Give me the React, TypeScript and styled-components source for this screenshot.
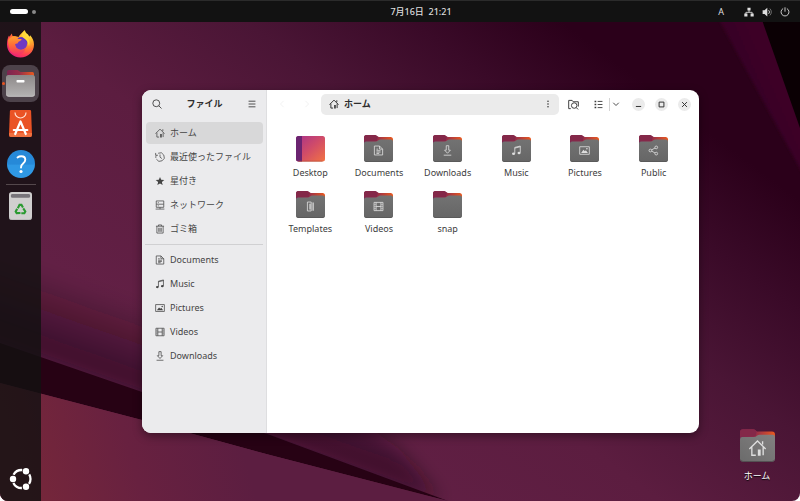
import React from "react";
import styled, { createGlobalStyle, css } from "styled-components";

const GlobalStyle = createGlobalStyle`
  *, *::before, *::after { box-sizing: border-box; }
  body {
    margin: 0;
    background: #fff;
    font: 9px/12px "Noto Sans", "Noto Sans CJK JP", sans-serif;
    color: #3d3d3d;
  }
  button {
    margin: 0;
    padding: 0;
    border: 0;
    background: none;
    font: inherit;
    color: inherit;
    cursor: pointer;
  }
  svg { display: block; flex: none; }
`;

/* ---------- glyphs ---------- */

type GlyphName =
  | "home" | "recent" | "star" | "network" | "trash" | "documents" | "music"
  | "pictures" | "videos" | "downloads" | "share" | "templates" | "search"
  | "menu" | "back" | "forward" | "more" | "folderSearch" | "list" | "chevron"
  | "minimize" | "maximize" | "close" | "wired" | "volume" | "power";

const glyphs: Record<GlyphName, React.ReactNode> = {
  home: (
    <>
      <path d="M.8 9 8 1.800l7.200 7.200M3 7.500v7h3.500M13 7.500v7M12.500 2v3" />
      <path d="M8.300 9.500h2.500V15H8.300z" fill="currentColor" stroke="none" />
    </>
  ),
  recent: (
    <>
      <path d="M5 2A6.800 6.800 0 1 1 2.200 11.500" />
      <path d="M1.300 9.500a6.800 6.800 0 0 1 .7-4" />
      <path d="M1 1.500v3.700h3.700M8 4v4.200l3 2.300" />
    </>
  ),
  star: (
    <path
      d="m8 1.400 1.900 4.700 5 .3-3.900 3.200 1.300 4.900L8 11.800l-4.300 2.700L5 9.600 1.100 6.400l5-.3z"
      fill="currentColor"
      stroke="none"
    />
  ),
  network: (
    <path d="M2 1.500h12v5.200H2zM2 6.700v5h12v-5M4.500 4.200h1.500M4.500 9.300h1.500M1 14.500h14M8 11.700v2.800" />
  ),
  trash: (
    <path d="M1.500 3.500h13M5.500 3.500v-2h5v2M3 3.500v11h10v-11M6 6v6.500M8 6v6.500M10 6v6.500" />
  ),
  documents: (
    <path d="M2 1.500h7.500l4.500 4.500v8.500H2zM9.500 1.500V6H14M5 6h2.500M5 8.300h6M5 10.300h6M5 12.300h4" />
  ),
  music: (
    <>
      <path d="M5.500 12.500v-9l8-2v9.500M5.500 4.500l8-2" />
      <ellipse cx="3.700" cy="12.800" rx="2.200" ry="1.800" fill="currentColor" stroke="none" />
      <ellipse cx="11.700" cy="11.500" rx="2.200" ry="1.800" fill="currentColor" stroke="none" />
    </>
  ),
  pictures: (
    <>
      <path d="M1 2.500h14v11H1z" />
      <path d="m3 11.500 3.500-4.500 2 2L10 7.500l3 4z" fill="currentColor" stroke="none" />
      <circle cx="11.500" cy="5.500" r="1.200" fill="currentColor" stroke="none" />
    </>
  ),
  videos: (
    <>
      <path d="M1.500 2h13v12h-13zM4.500 2v12M11.500 2v12M4.500 8h7" />
      <path d="M1.500 5h3M1.500 8h3M1.500 11h3M11.500 5h3M11.500 8h3M11.500 11h3" strokeWidth=".7" />
    </>
  ),
  downloads: <path d="M6.200 1h3.600v6.500h2.400L8 12 3.800 7.500h2.400zM2.500 14.800h11" />,
  share: (
    <>
      <circle cx="3.500" cy="8" r="2" />
      <circle cx="12" cy="3.500" r="2" />
      <circle cx="12" cy="12.500" r="2" />
      <path d="m5.300 7.100 4.900-2.700M5.300 8.900l4.900 2.700" />
    </>
  ),
  templates: (
    <>
      <path d="M3.500 1.500h5.500v13H3.500z" />
      <path d="M11.800 2v12M7.300 4v8.500" strokeWidth="1.800" />
    </>
  ),
  search: (
    <>
      <circle cx="6.800" cy="6.800" r="5.500" />
      <path d="m10.800 10.800 4.400 4.400" />
    </>
  ),
  menu: <path d="M2.500 3.500h11M2.500 8h11M2.500 12.500h11" />,
  back: <path d="m10.500 3-5 5 5 5" />,
  forward: <path d="m5.500 3 5 5-5 5" />,
  more: (
    <g fill="currentColor" stroke="none">
      <circle cx="8" cy="2.500" r="1.600" />
      <circle cx="8" cy="8" r="1.600" />
      <circle cx="8" cy="13.500" r="1.600" />
    </g>
  ),
  folderSearch: (
    <>
      <path d="M4 14H1V2h5l1.500 2H15v7" />
      <circle cx="9" cy="9.500" r="4" />
      <path d="m12 12.500 2.700 2.700" />
    </>
  ),
  list: (
    <>
      <path d="M1 2.500h3M1 8h3M1 13.500h3" strokeWidth="2.600" />
      <path d="M6.500 2.500H15M6.500 8H15M6.500 13.500H15" strokeWidth="1.600" />
    </>
  ),
  chevron: <path d="m2.500 5.500 5.500 5.500 5.500-5.500" />,
  minimize: <path d="M2 12.500h12" />,
  maximize: <path d="M2.500 2.500h11v11h-11z" />,
  close: <path d="m2.500 2.500 11 11M13.500 2.500l-11 11" />,
  wired: (
    <>
      <path d="M5.500 1h5v4.500h-5zM.5 10.500h5V15h-5zM10.500 10.500h5V15h-5z" fill="currentColor" stroke="none" />
      <path d="M8 5v3.500M3 11V8.500h10V11" />
    </>
  ),
  volume: (
    <>
      <path d="M1 5h3l4.500-4v14L4 11H1z" fill="currentColor" stroke="none" />
      <path d="M10.500 5a4 4 0 0 1 0 6" />
      <path d="M12.500 2.500a7.500 7.500 0 0 1 0 11" opacity=".5" />
    </>
  ),
  power: <path d="M5 2.500a6.300 6.300 0 1 0 6 0M8 .5v7" />,
};

const Glyph = ({ name, size = 10, weight = 1.2, x, y }: {
  name: GlyphName; size?: number; weight?: number; x?: number; y?: number;
}) => (
  <svg
    x={x}
    y={y}
    width={size}
    height={size}
    viewBox="0 0 16 16"
    fill="none"
    stroke="currentColor"
    strokeWidth={weight}
    aria-hidden="true"
  >
    {glyphs[name]}
  </svg>
);

/* ---------- illustrations ---------- */

const SharedPaints = () => (
  <svg width="0" height="0" aria-hidden="true">
    <defs>
      <linearGradient id="folderBack" x1="0" x2="1">
        <stop offset="0" stopColor="#7c2450" />
        <stop offset=".45" stopColor="#962d49" />
        <stop offset="1" stopColor="#ea5a20" />
      </linearGradient>
      <linearGradient id="folderFront" x1="0" y1="0" x2="0" y2="1">
        <stop offset="0" stopColor="#727272" />
        <stop offset="1" stopColor="#666" />
      </linearGradient>
      <linearGradient id="homeFront" x1="0" y1="1" x2="1" y2="0">
        <stop offset="0" stopColor="#6b6b6b" />
        <stop offset="1" stopColor="#828080" />
      </linearGradient>
      <linearGradient id="desktopFace" x1="0" y1="0" x2="1" y2="1">
        <stop offset="0" stopColor="#a8328a" />
        <stop offset=".5" stopColor="#d14c68" />
        <stop offset="1" stopColor="#f27343" />
      </linearGradient>
    </defs>
  </svg>
);

const FolderArt = ({ glyph, width = 29, height = 27, front = "folderFront", glyphSize = 11 }: {
  glyph?: GlyphName; width?: number; height?: number; front?: string; glyphSize?: number;
}) => (
  <svg width={width} height={height} viewBox="0 0 29 27" color="#dedede" aria-hidden="true">
    <path d="M0 2.500A2.500 2.500 0 0 1 2.500 0h8q1.500 0 2.500 1t2.500 1h11A2.500 2.500 0 0 1 29 4.500V22H0z" fill="url(#folderBack)" />
    <path d="M0 2.500A2.500 2.500 0 0 1 2.500 0h8q1.500 0 2.500 1l.8.6-1 4.400H0z" fill="#842849" />
    <path d="M0 8.500Q0 6.500 2 6.500h9.500q1.500 0 2.500-1t2.500-1H27q2 0 2 2v18a2.500 2.500 0 0 1-2.500 2.500h-24A2.500 2.500 0 0 1 0 24.500z" fill={`url(#${front})`} />
    <path d="M.5 25.500q1 1.300 2.500 1.300h23q1.500 0 2.500-1.300" fill="none" stroke="#4c4c4c" strokeWidth=".6" />
    {glyph && <Glyph name={glyph} size={glyphSize} x={14.5 - glyphSize / 2} y={15.5 - glyphSize / 2} />}
  </svg>
);

const DesktopArt = () => (
  <svg width="29" height="27" viewBox="0 0 29 27" aria-hidden="true">
    <rect y="1" width="29" height="25.500" rx="2.500" fill="url(#desktopFace)" />
    <path d="M2.500 1H6v25.500H2.500A2.500 2.500 0 0 1 0 24V3.500A2.500 2.500 0 0 1 2.500 1z" fill="#6b2470" />
    <path d="M2.500 26.200h24" stroke="#a8482f" strokeWidth=".6" />
  </svg>
);

const FirefoxArt = () => (
  <svg width="27" height="28" viewBox="0 0 27 28" aria-hidden="true">
    <defs>
      <radialGradient id="foxBody" cx=".78" cy=".12" r="1">
        <stop offset="0" stopColor="#fff04a" />
        <stop offset=".3" stopColor="#ffb82e" />
        <stop offset=".55" stopColor="#ff7a30" />
        <stop offset=".8" stopColor="#ff3a58" />
        <stop offset="1" stopColor="#e51e7c" />
      </radialGradient>
      <linearGradient id="foxFace" x1="0" y1="0" x2="0" y2="1">
        <stop offset="0" stopColor="#ffa030" />
        <stop offset=".5" stopColor="#ff6a38" />
        <stop offset="1" stopColor="#f2306a" />
      </linearGradient>
    </defs>
    <path d="M17.500 0q1 2.800 3.500 4.500l1.500 2.200.6-1.500C25.500 8 27 10.500 27 14.500 27 22 21 27.500 13.500 27.500S0 22 0 14.500C0 10 1 7.500 2 5.500l.5 1.300L4.800 3.500 5.500 6l3.500.2L11.500 7q1-2 2.500-3.200T17.500 0z" fill="url(#foxBody)" />
    <circle cx="14" cy="13.500" r="6.200" fill="#7139c2" />
    <path d="M9.500 9q3-2.500 7-1.500 4 1 4 5.500l-2.500-2.500q-3-2-5-.5z" fill="#5b34c9" />
    <path d="M1 10q4-4.500 7.500-3.500l3 2.500h3q.5 1-1.500 2l-1.500.8-1 1.700q-1.500-.2-2.500 1 .5 3.500 3.500 5 4 1.500 7-1.500-1 7-8.500 6.500Q1 24 1 10z" fill="url(#foxFace)" />
    <path d="M17.500 1q.5 3.500 3 6.500 3 4 1.500 9-1-5-3.500-7-3.500-2.500-3.500-4.500 0-2.500 2.500-4z" fill="#ffd83a" />
  </svg>
);

const FilesArt = () => (
  <svg width="29" height="27" viewBox="0 0 29 27" aria-hidden="true">
    <defs>
      <linearGradient id="filesFront" x1="0" y1="0" x2="0" y2="1">
        <stop offset="0" stopColor="#8d8989" />
        <stop offset="1" stopColor="#b4b2b2" />
      </linearGradient>
    </defs>
    <path d="M1 2q0-2 2-2h8.500l3 2h12Q28 2 28 4v10H1z" fill="url(#folderBack)" />
    <rect y="5" width="29" height="21.500" rx="2.500" fill="url(#filesFront)" />
    <path d="M.5 25q1 1.400 2.500 1.400h23q1.500 0 2.500-1.400" fill="none" stroke="#e0dede" strokeWidth=".6" />
    <rect x="10.500" y="10" width="8" height="2.500" rx=".8" fill="#fff" />
  </svg>
);

const StoreArt = () => (
  <svg width="23" height="27" viewBox="0 0 23 27" aria-hidden="true">
    <path d="M2 0h19q1 0 1.100 1L23 24.500q0 2.500-2 2.500H2q-2 0-2-2.500L.9 1Q1 0 2 0z" fill="#ea5325" />
    <path d="M.1 23 0 24.500Q0 27 2 27h19q2 0 2-2.500V23z" fill="#f0703f" />
    <path d="M6 2.500a5.500 5.500 0 0 0 11 0" fill="none" stroke="#ffe2d4" strokeWidth="1.200" />
    <path d="m6.200 24 5.300-12.500L16.800 24M4.800 20h13.500" fill="none" stroke="#fff" strokeWidth="2.200" strokeLinecap="round" strokeLinejoin="round" />
  </svg>
);

const HelpArt = () => (
  <svg width="28" height="28" viewBox="0 0 28 28" aria-hidden="true">
    <defs>
      <linearGradient id="helpFace" x1="0" y1="0" x2="0" y2="1">
        <stop offset=".5" stopColor="#2689d8" />
        <stop offset=".55" stopColor="#2f98e4" />
      </linearGradient>
    </defs>
    <circle cx="14" cy="14" r="14" fill="url(#helpFace)" />
    <path d="M10.500 7.500q1.500-1.200 3.800-1.200 4 0 4 3.500 0 2-2.200 3.700T14 17.500" fill="none" stroke="#fff" strokeWidth="1.900" strokeLinecap="round" />
    <circle cx="14" cy="21.500" r="1.600" fill="#fff" />
  </svg>
);

const TrashArt = () => (
  <svg width="23" height="28" viewBox="0 0 24 29" aria-hidden="true">
    <rect width="24" height="29" rx="3" fill="#d0cfcf" />
    <rect x="2" y="2" width="20" height="4" rx="1.500" fill="#77747a" />
    <path d="M0 25q0 3 3 3.600h18q3-.6 3-3.600v1q0 3-3 3H3q-3 0-3-3z" fill="#aaa" />
    <g fill="none" stroke="#2a9a31" strokeWidth="2.200">
      <path d="m9.200 16.800 1.800-3.500h2l1.600 2.700" />
      <path d="m9.200 16.800 1.800-3.500h2l1.600 2.700" transform="rotate(120 12 18.500)" />
      <path d="m9.200 16.800 1.800-3.500h2l1.600 2.700" transform="rotate(240 12 18.500)" />
    </g>
  </svg>
);

const UbuntuArt = () => (
  <svg width="24" height="24" viewBox="0 0 24 24" aria-hidden="true">
    <circle cx="12.500" cy="12" r="9" fill="none" stroke="#fff" strokeWidth="2.300" strokeDasharray="10.400 8.450" strokeDashoffset="5.200" />
    <g fill="#fff">
      <circle cx="4" cy="12" r="3.200" />
      <circle cx="17" cy="4.300" r="3.200" />
      <circle cx="17" cy="19.700" r="3.200" />
    </g>
  </svg>
);

const WallpaperArt = styled.svg`
  position: absolute;
  inset: 0;
  width: 100%;
  height: 100%;
`;

const Wallpaper = () => (
  <WallpaperArt viewBox="0 0 800 501" preserveAspectRatio="none" aria-hidden="true">
    <defs>
      <linearGradient id="wallBase" gradientUnits="userSpaceOnUse" x1="300" y1="450" x2="600" y2="50">
        <stop offset="0" stopColor="#622045" />
        <stop offset=".35" stopColor="#5c1d40" />
        <stop offset=".62" stopColor="#4a1535" />
        <stop offset=".82" stopColor="#3a0a28" />
        <stop offset="1" stopColor="#2b001a" />
      </linearGradient>
      <linearGradient id="wallShade" gradientUnits="userSpaceOnUse" x1="200" y1="414" x2="228" y2="335">
        <stop offset="0" stopColor="#1e0014" stopOpacity=".6" />
        <stop offset="1" stopColor="#1e0014" stopOpacity="0" />
      </linearGradient>
      <linearGradient id="wallFloor" gradientUnits="userSpaceOnUse" x1="30" y1="501" x2="240" y2="440">
        <stop offset="0" stopColor="#76273a" />
        <stop offset=".5" stopColor="#682140" />
        <stop offset="1" stopColor="#5c1e41" />
      </linearGradient>
      <linearGradient id="wallBand" gradientUnits="userSpaceOnUse" x1="735" y1="90" x2="770" y2="75">
        <stop offset="0" stopColor="#340022" />
        <stop offset="1" stopColor="#3c0028" />
      </linearGradient>
      <filter id="wallSoft" x="-10%" y="-20%" width="120%" height="140%">
        <feGaussianBlur stdDeviation="9" />
      </filter>
      <filter id="bandSoft" x="-20%" y="-20%" width="140%" height="140%">
        <feGaussianBlur stdDeviation="1.500" />
      </filter>
    </defs>
    <path d="M0 0h800v501H0z" fill="url(#wallBase)" />
    <path d="M-40 330-40 230 142 290 300 375 400 450 440 501z" fill="url(#wallShade)" filter="url(#wallSoft)" />
    <path d="M0 343 142 392l128 43 178 66-178-46-128-35L0 383z" fill="#270214" />
    <path d="M0 383 142 420l128 35 178 46H0z" fill="url(#wallFloor)" />
    <path d="M703-10h62l55 135v80z" fill="url(#wallBand)" filter="url(#bandSoft)" />
    <path d="M755 0h45v128z" fill="#0b0004" />
  </WallpaperArt>
);

/* ---------- shell ---------- */

const Screen = styled.div`
  position: relative;
  display: flex;
  flex-direction: column;
  min-height: 100vh;
  overflow: hidden;
  border-radius: 0 0 8px 8px;
  isolation: isolate;
`;

const TopBar = styled.header`
  position: relative;
  display: grid;
  grid-template-columns: 1fr auto 1fr;
  align-items: center;
  height: 22px;
  padding: 0 10px;
  border-top: 1px solid #2b2b2b;
  background: #121212;
  color: #dedede;
`;

const Workspaces = styled.button`
  display: flex;
  align-items: center;
  justify-self: start;
  gap: 4px;
`;

const WorkspaceDot = styled.span<{ $active?: boolean }>`
  width: ${(p) => (p.$active ? 18 : 4)}px;
  height: ${(p) => (p.$active ? 5 : 4)}px;
  border-radius: 3px;
  background: ${(p) => (p.$active ? "#fff" : "#8a8a8a")};
`;

const Clock = styled.button`
  padding-left: 42px;
  font-weight: 500;
  white-space: pre;
`;

const StatusArea = styled.div`
  display: flex;
  align-items: center;
  justify-self: end;
  gap: 20px;
`;

const StatusButton = styled.button`
  display: flex;
  align-items: center;
  gap: 8px;
`;

const Body = styled.div`
  position: relative;
  display: flex;
  flex: 1;
`;

const Dock = styled.nav`
  display: flex;
  flex-direction: column;
  align-items: center;
  gap: 3px;
  flex: 0 0 41px;
  padding: 3px 0 4px;
  background: rgba(18, 17, 17, 0.82);
`;

const DockItem = styled.button<{ $active?: boolean; $last?: boolean }>`
  position: relative;
  display: grid;
  place-items: center;
  width: 37px;
  height: 37px;
  border-radius: 8px;
  ${(p) => p.$last && css`margin-top: auto;`}
  ${(p) =>
    p.$active &&
    css`
      background: #4d424a;
      &::before {
        content: "";
        position: absolute;
        left: 0;
        top: 17px;
        width: 3px;
        height: 3px;
        border-radius: 50%;
        background: #e95420;
      }
    `}
`;

const DockDivider = styled.hr`
  width: 30px;
  height: 1px;
  margin: -1px 0;
  border: 0;
  background: #54484c;
`;

const Desktop = styled.main`
  position: relative;
  display: flex;
  flex: 1;
  min-width: 0;
  padding: 68px 101px 68px;
`;

const DesktopIcon = styled.button`
  position: absolute;
  right: 20px;
  bottom: 19px;
  display: flex;
  flex-direction: column;
  align-items: center;
  gap: 8px;
  width: 46px;
  color: #fff;
  text-shadow: 0 1px 1px #000;
`;

/* ---------- file manager window ---------- */

const Window = styled.section`
  display: flex;
  flex: 1;
  min-width: 0;
  overflow: hidden;
  border-radius: 9px;
  background: #fff;
  box-shadow: 0 3px 10px rgba(0, 0, 0, 0.4);
`;

const Sidebar = styled.aside`
  flex: 0 0 125px;
  border-right: 1px solid #dedee0;
  background: #ebebed;
`;

const SidebarHeader = styled.div`
  display: flex;
  align-items: center;
  justify-content: space-between;
  height: 28px;
  padding: 0 3px 0 4px;
`;

const Title = styled.h1`
  margin: 0;
  font-size: 9px;
  line-height: 12px;
  font-weight: 700;
  color: #2e2e2e;
`;

const IconButton = styled.button<{ $faint?: boolean; $narrow?: boolean }>`
  display: grid;
  place-items: center;
  width: ${(p) => (p.$narrow ? 12 : 22)}px;
  height: 22px;
  color: ${(p) => (p.$faint ? "#ededed" : "#3a3a3a")};
`;

const Places = styled.nav`
  display: flex;
  flex-direction: column;
  gap: 2px;
  padding: 4px 3px 4px 4px;
`;

const Place = styled.button<{ $selected?: boolean }>`
  display: flex;
  align-items: center;
  gap: 5px;
  height: 22px;
  padding: 0 9px;
  border-radius: 4px;
  background: ${(p) => (p.$selected ? "#d8d8d9" : "transparent")};
  color: #454545;
  white-space: nowrap;
`;

const PlacesDivider = styled.hr`
  height: 1px;
  margin: 0 3px;
  border: 0;
  background: #d0d0d2;
`;

const Content = styled.div`
  flex: 1;
  min-width: 0;
`;

const Toolbar = styled.div`
  display: flex;
  align-items: center;
  height: 28px;
  padding: 0 8px 0 4px;
`;

const ToolGroup = styled.div<{ $gap?: number; $start?: number; $end?: number }>`
  display: flex;
  align-items: center;
  gap: ${(p) => p.$gap ?? 0}px;
  margin-left: ${(p) => p.$start ?? 0}px;
  margin-right: ${(p) => p.$end ?? 0}px;
`;

const PathBar = styled.div`
  display: flex;
  align-items: center;
  justify-content: space-between;
  flex: 1;
  height: 21px;
  padding-left: 8px;
  border-radius: 5px;
  background: #ebebeb;
`;

const PathSegment = styled.button`
  display: flex;
  align-items: center;
  gap: 5px;
  font-weight: 700;
  color: #2e2e2e;
`;

const SplitDivider = styled.span`
  width: 1px;
  height: 13px;
  background: #d4d4d4;
`;

const WindowControl = styled.button`
  display: grid;
  place-items: center;
  width: 13px;
  height: 13px;
  border-radius: 50%;
  background: #ebebeb;
  color: #2e2e2e;
`;

const FileGrid = styled.div`
  display: grid;
  grid-template-columns: repeat(6, 1fr);
  row-gap: 12px;
  padding: 17px 11px 17px 9px;
`;

const FileItem = styled.button`
  display: flex;
  flex-direction: column;
  align-items: center;
  gap: 5px;
`;

const mainPlaces: { label: string; glyph: GlyphName }[] = [
  { label: "ホーム", glyph: "home" },
  { label: "最近使ったファイル", glyph: "recent" },
  { label: "星付き", glyph: "star" },
  { label: "ネットワーク", glyph: "network" },
  { label: "ゴミ箱", glyph: "trash" },
];

const bookmarks: { label: string; glyph: GlyphName }[] = [
  { label: "Documents", glyph: "documents" },
  { label: "Music", glyph: "music" },
  { label: "Pictures", glyph: "pictures" },
  { label: "Videos", glyph: "videos" },
  { label: "Downloads", glyph: "downloads" },
];

const files: { label: string; glyph?: GlyphName; desktop?: boolean }[] = [
  { label: "Desktop", desktop: true },
  { label: "Documents", glyph: "documents" },
  { label: "Downloads", glyph: "downloads" },
  { label: "Music", glyph: "music" },
  { label: "Pictures", glyph: "pictures" },
  { label: "Public", glyph: "share" },
  { label: "Templates", glyph: "templates" },
  { label: "Videos", glyph: "videos" },
  { label: "snap" },
];

const FileManager = () => (
  <Window aria-label="ファイル">
    <Sidebar>
      <SidebarHeader>
        <IconButton aria-label="検索"><Glyph name="search" weight={1.4} /></IconButton>
        <Title>ファイル</Title>
        <IconButton aria-label="メニュー"><Glyph name="menu" weight={1.4} /></IconButton>
      </SidebarHeader>
      <Places aria-label="場所">
        {mainPlaces.map((place, i) => (
          <Place key={place.label} $selected={i === 0}>
            <Glyph name={place.glyph} />
            {place.label}
          </Place>
        ))}
      </Places>
      <PlacesDivider />
      <Places aria-label="ブックマーク">
        {bookmarks.map((place) => (
          <Place key={place.label}>
            <Glyph name={place.glyph} />
            {place.label}
          </Place>
        ))}
      </Places>
    </Sidebar>
    <Content>
      <Toolbar>
        <ToolGroup $gap={3} $end={3}>
          <IconButton $faint aria-label="戻る"><Glyph name="back" /></IconButton>
          <IconButton $faint aria-label="進む"><Glyph name="forward" /></IconButton>
        </ToolGroup>
        <PathBar>
          <PathSegment><Glyph name="home" weight={1.5} />ホーム</PathSegment>
          <IconButton aria-label="その他"><Glyph name="more" size={8} /></IconButton>
        </PathBar>
        <ToolGroup $gap={3} $start={3}>
          <IconButton aria-label="フォルダー内を検索"><Glyph name="folderSearch" size={11} weight={1.4} /></IconButton>
          <IconButton aria-label="リスト表示"><Glyph name="list" size={9} /></IconButton>
        </ToolGroup>
        <ToolGroup $end={10}>
          <SplitDivider />
          <IconButton $narrow aria-label="表示オプション"><Glyph name="chevron" size={8} weight={1.8} /></IconButton>
        </ToolGroup>
        <ToolGroup $gap={10}>
          <WindowControl aria-label="最小化"><Glyph name="minimize" size={7} weight={2.2} /></WindowControl>
          <WindowControl aria-label="最大化"><Glyph name="maximize" size={7} weight={2.2} /></WindowControl>
          <WindowControl aria-label="閉じる"><Glyph name="close" size={7} weight={2.2} /></WindowControl>
        </ToolGroup>
      </Toolbar>
      <FileGrid>
        {files.map((file) => (
          <FileItem key={file.label}>
            {file.desktop ? <DesktopArt /> : <FolderArt glyph={file.glyph} />}
            <span>{file.label}</span>
          </FileItem>
        ))}
      </FileGrid>
    </Content>
  </Window>
);

export default function App() {
  return (
    <>
      <GlobalStyle />
      <Screen>
        <Wallpaper />
        <TopBar>
          <Workspaces aria-label="アクティビティ">
            <WorkspaceDot $active />
            <WorkspaceDot />
          </Workspaces>
          <Clock>{"7月16日  21:21"}</Clock>
          <StatusArea>
            <StatusButton aria-label="入力ソース">A</StatusButton>
            <StatusButton aria-label="システム">
              <Glyph name="wired" weight={1.4} />
              <Glyph name="volume" weight={1.4} />
              <Glyph name="power" weight={1.4} />
            </StatusButton>
          </StatusArea>
        </TopBar>
        <Body>
          <Dock aria-label="Dock">
            <DockItem aria-label="Firefox"><FirefoxArt /></DockItem>
            <DockItem $active aria-label="ファイル"><FilesArt /></DockItem>
            <DockItem aria-label="App Center"><StoreArt /></DockItem>
            <DockItem aria-label="ヘルプ"><HelpArt /></DockItem>
            <DockDivider />
            <DockItem aria-label="ゴミ箱"><TrashArt /></DockItem>
            <DockItem $last aria-label="アプリを表示"><UbuntuArt /></DockItem>
          </Dock>
          <Desktop>
            <FileManager />
            <DesktopIcon>
              <FolderArt glyph="home" width={35} height={33} front="homeFront" glyphSize={15} />
              <span>ホーム</span>
            </DesktopIcon>
          </Desktop>
        </Body>
      </Screen>
      <SharedPaints />
    </>
  );
}
